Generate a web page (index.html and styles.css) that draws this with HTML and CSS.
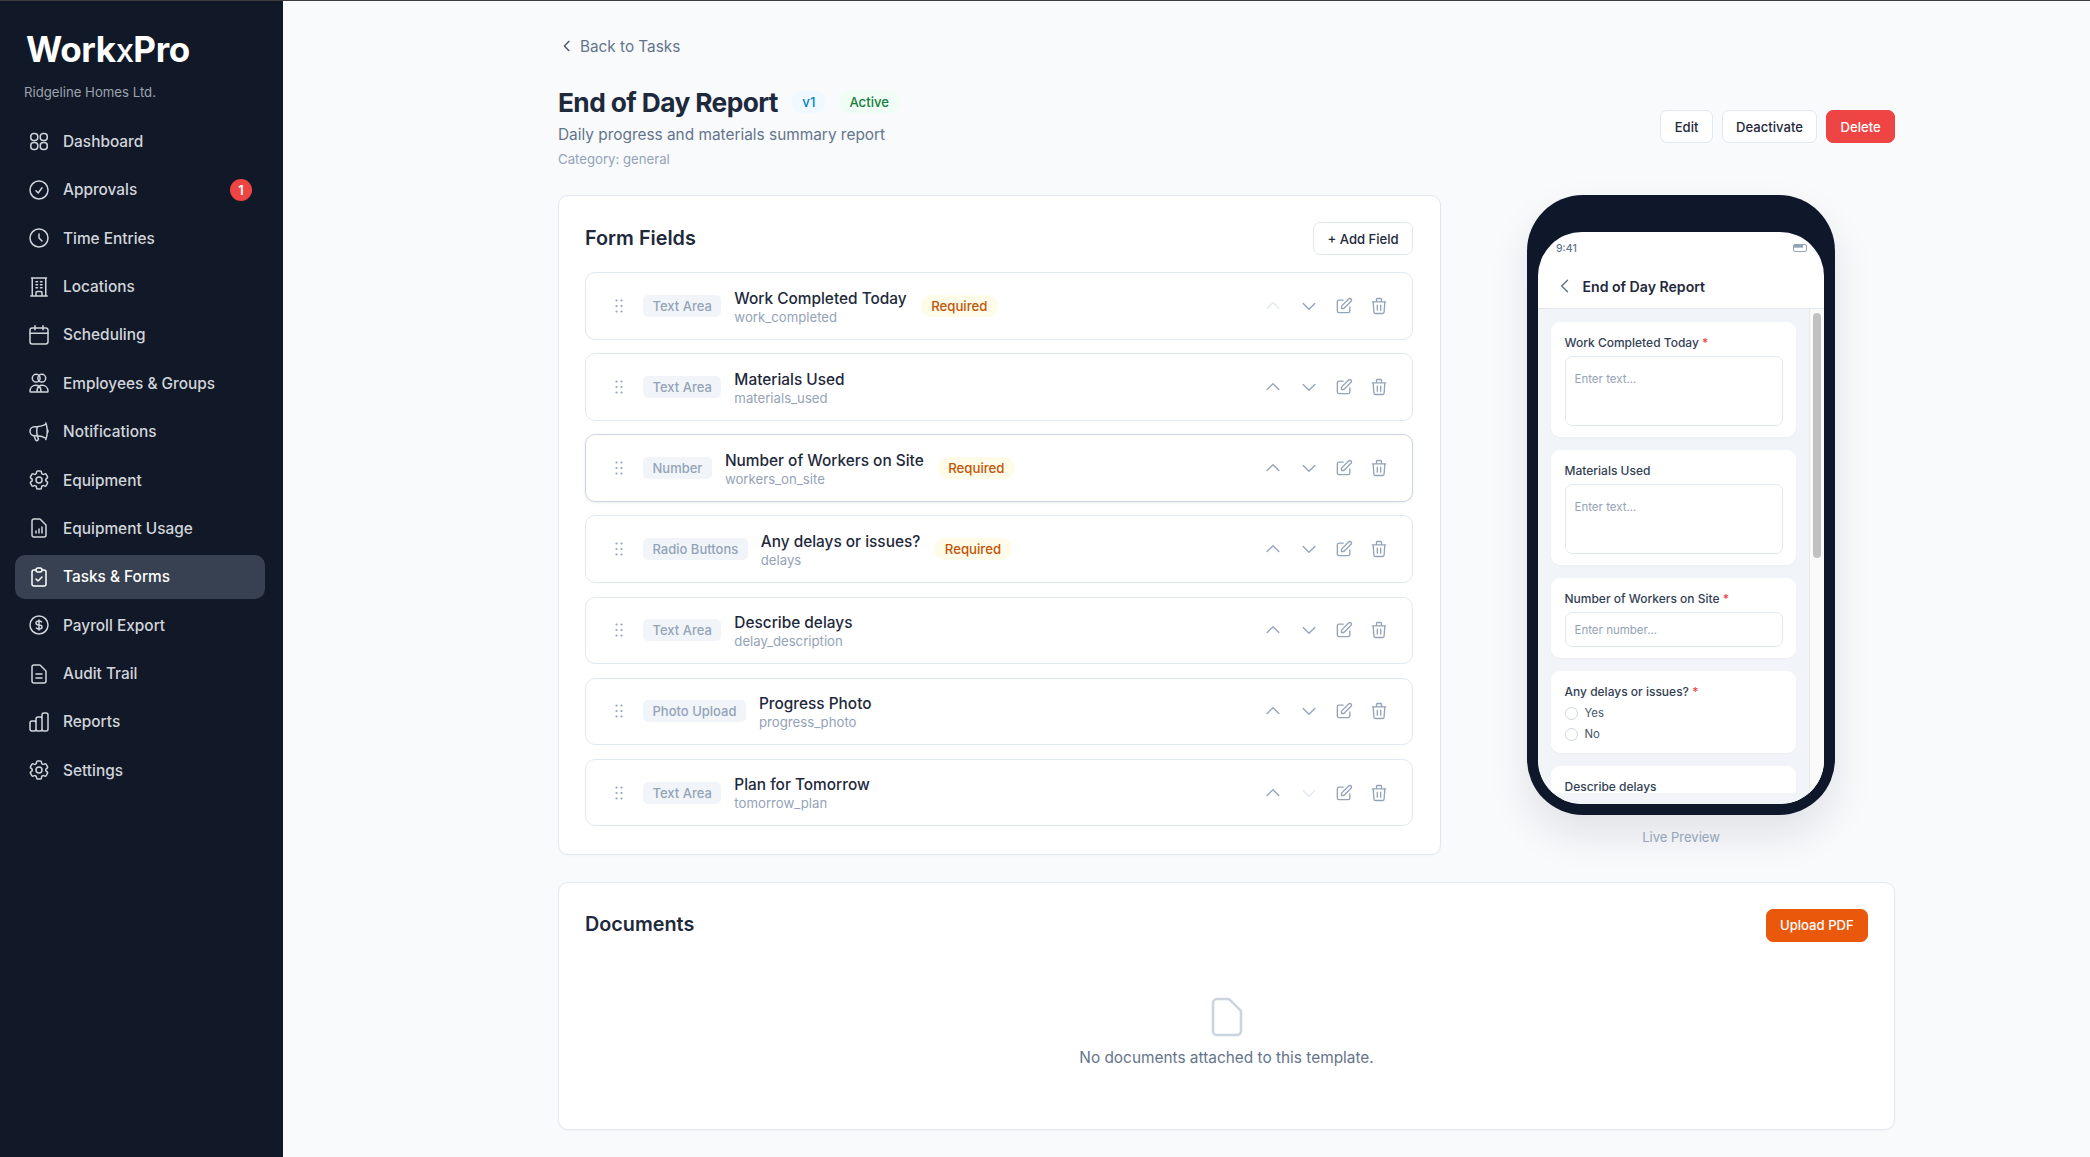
FILE: index.html
```html
<!DOCTYPE html>
<html lang="en">
<head>
<meta charset="utf-8">
<title>End of Day Report</title>
<link rel="stylesheet" href="styles.css">
</head>
<body>
<svg class="defs" aria-hidden="true">
  <symbol id="i-grid" viewBox="0 0 24 24"><rect x="3.75" y="4.5" width="7" height="7" rx="3"/><rect x="13.25" y="4.5" width="7" height="7" rx="3"/><rect x="3.75" y="13.5" width="7" height="7" rx="3"/><rect x="13.25" y="13.5" width="7" height="7" rx="3"/></symbol>
  <symbol id="i-check" viewBox="0 0 24 24"><path d="M9 12.75L11.25 15 15 9.75M21 12a9 9 0 11-18 0 9 9 0 0118 0z"/></symbol>
  <symbol id="i-clock" viewBox="0 0 24 24"><path d="M12 8v4l3 3m6-3a9 9 0 11-18 0 9 9 0 0118 0z"/></symbol>
  <symbol id="i-building" viewBox="0 0 24 24"><path d="M3.75 21h16.5M4.5 3h15M5.25 3v18m13.5-18v18M9 6.75h1.5m-1.5 3h1.5m-1.5 3h1.5m3-6H15m-1.5 3H15m-1.5 3H15M9 21v-3.375c0-.621.504-1.125 1.125-1.125h3.75c.621 0 1.125.504 1.125 1.125V21"/></symbol>
  <symbol id="i-calendar" viewBox="0 0 24 24"><rect x="3" y="5" width="18" height="16" rx="2.2"/><path d="M3 10.2h18M8 2.8v4M16 2.8v4"/></symbol>
  <symbol id="i-users" viewBox="0 0 24 24"><circle cx="9.2" cy="7.2" r="3.9"/><circle cx="14.8" cy="7.2" r="3.9"/><path d="M3 20.3c0-3.5 2.5-6 6-6 1.3 0 2.3.3 3 .9.7-.6 1.7-.9 3-.9 3.5 0 6 2.5 6 6 0 .5-.3.8-.8.8H3.8c-.5 0-.8-.3-.8-.8zM12 15.2c-1.2 1-2 3-2 5.9M12 15.2c1.2 1 2 3 2 5.9"/></symbol>
  <symbol id="i-mega" viewBox="0 0 24 24"><path d="M10.34 15.84c-.688-.06-1.386-.09-2.09-.09H7.5a4.5 4.5 0 110-9h.75c.704 0 1.402-.03 2.09-.09m0 9.18c.253.962.584 1.892.985 2.783.247.55.06 1.21-.463 1.511l-.657.38c-.551.318-1.26.117-1.527-.461a20.845 20.845 0 01-1.44-4.282m3.102.069a18.03 18.03 0 01-.59-4.59c0-1.586.205-3.124.59-4.59m0 9.18a23.848 23.848 0 018.835 2.535M10.34 6.66a23.847 23.847 0 008.835-2.535m0 0A23.74 23.74 0 0018.795 3m.38 1.125a23.91 23.91 0 011.014 5.395m-1.014 8.855c-.118.38-.245.754-.38 1.125m.38-1.125a23.91 23.91 0 001.014-5.395m0-3.46c.495.413.811 1.035.811 1.73 0 .695-.316 1.317-.811 1.73m0-3.46a24.347 24.347 0 010 3.46"/></symbol>
  <symbol id="i-cog" viewBox="0 0 24 24"><path d="M9.594 3.94c.09-.542.56-.94 1.11-.94h2.593c.55 0 1.02.398 1.11.94l.213 1.281c.063.374.313.686.645.87.074.04.147.083.22.127.324.196.72.257 1.075.124l1.217-.456a1.125 1.125 0 011.37.49l1.296 2.247a1.125 1.125 0 01-.26 1.431l-1.003.827c-.293.24-.438.613-.431.992a6.759 6.759 0 010 .255c-.007.378.138.75.43.99l1.005.828c.424.35.534.954.26 1.43l-1.298 2.247a1.125 1.125 0 01-1.369.491l-1.217-.456c-.355-.133-.75-.072-1.076.124a6.57 6.57 0 01-.22.128c-.331.183-.581.495-.644.869l-.213 1.28c-.09.543-.56.941-1.11.941h-2.594c-.55 0-1.02-.398-1.11-.94l-.213-1.281c-.062-.374-.312-.686-.644-.87a6.52 6.52 0 01-.22-.127c-.325-.196-.72-.257-1.076-.124l-1.217.456a1.125 1.125 0 01-1.369-.49l-1.297-2.247a1.125 1.125 0 01.26-1.431l1.004-.827c.292-.24.437-.613.43-.992a6.932 6.932 0 010-.255c.007-.378-.138-.75-.43-.99l-1.004-.828a1.125 1.125 0 01-.26-1.43l1.297-2.247a1.125 1.125 0 011.37-.491l1.216.456c.356.133.751.072 1.076-.124.072-.044.146-.087.22-.128.332-.183.582-.495.644-.869l.214-1.281z"/><path d="M15 12a3 3 0 11-6 0 3 3 0 016 0z"/></symbol>
  <symbol id="i-report" viewBox="0 0 24 24"><path d="M9 17v-2m3 2v-4m3 4v-6m2 10H7a2 2 0 01-2-2V5a2 2 0 012-2h5.586a1 1 0 01.707.293l5.414 5.414a1 1 0 01.293.707V19a2 2 0 01-2 2z"/></symbol>
  <symbol id="i-clipboard" viewBox="0 0 24 24"><path d="M9 5H7a2 2 0 00-2 2v12a2 2 0 002 2h10a2 2 0 002-2V7a2 2 0 00-2-2h-2M9 5a2 2 0 002 2h2a2 2 0 002-2M9 5a2 2 0 012-2h2a2 2 0 012 2m-6 9l2 2 4-4"/></symbol>
  <symbol id="i-dollar" viewBox="0 0 24 24"><path d="M12 8c-1.657 0-3 .895-3 2s1.343 2 3 2 3 .895 3 2-1.343 2-3 2m0-8c1.11 0 2.08.402 2.599 1M12 8V7m0 1v8m0 0v1m0-1c-1.11 0-2.08-.402-2.599-1M21 12a9 9 0 11-18 0 9 9 0 0118 0z"/></symbol>
  <symbol id="i-doc" viewBox="0 0 24 24"><path d="M9 12h6m-6 4h6m2 5H7a2 2 0 01-2-2V5a2 2 0 012-2h5.586a1 1 0 01.707.293l5.414 5.414a1 1 0 01.293.707V19a2 2 0 01-2 2z"/></symbol>
  <symbol id="i-bars" viewBox="0 0 24 24"><path d="M9 19v-6a2 2 0 00-2-2H5a2 2 0 00-2 2v6a2 2 0 002 2h2a2 2 0 002-2zm0 0V9a2 2 0 012-2h2a2 2 0 012 2v10m-6 0a2 2 0 002 2h2a2 2 0 002-2m0 0V5a2 2 0 012-2h2a2 2 0 012 2v14a2 2 0 01-2 2h-2a2 2 0 01-2-2z"/></symbol>
  <symbol id="i-left" viewBox="0 0 24 24"><path d="M15 19l-7-7 7-7"/></symbol>
  <symbol id="i-up" viewBox="0 0 24 24"><path d="M5 15l7-7 7 7"/></symbol>
  <symbol id="i-down" viewBox="0 0 24 24"><path d="M19 9l-7 7-7-7"/></symbol>
  <symbol id="i-edit" viewBox="0 0 24 24"><path d="M11 5H6a2 2 0 00-2 2v11a2 2 0 002 2h11a2 2 0 002-2v-5m-1.414-9.414a2 2 0 112.828 2.828L11.828 15H9v-2.828l8.586-8.586z"/></symbol>
  <symbol id="i-trash" viewBox="0 0 24 24"><path d="M19 7l-.867 12.142A2 2 0 0116.138 21H7.862a2 2 0 01-1.995-1.858L5 7m5 4v6m4-6v6m1-10V4a1 1 0 00-1-1h-4a1 1 0 00-1 1v3M4 7h16"/></symbol>
  <symbol id="i-file" viewBox="0 0 24 24"><path d="M7 21h10a2 2 0 002-2V9.414a1 1 0 00-.293-.707l-5.414-5.414A1 1 0 0012.586 3H7a2 2 0 00-2 2v14a2 2 0 002 2z"/></symbol>
  <symbol id="i-drag" viewBox="0 0 12 16"><circle cx="2.5" cy="2.5" r="1.1"/><circle cx="7.5" cy="2.5" r="1.1"/><circle cx="2.5" cy="8" r="1.1"/><circle cx="7.5" cy="8" r="1.1"/><circle cx="2.5" cy="13.5" r="1.1"/><circle cx="7.5" cy="13.5" r="1.1"/></symbol>
</svg>

<div class="app">
  <aside class="sidebar">
    <div class="brand">
      <div class="logo">Work<span class="logo-x">x</span>Pro</div>
      <div class="company">Ridgeline Homes Ltd.</div>
    </div>
    <nav class="nav">
      <a class="nav-item"><svg class="nav-icon"><use href="#i-grid"/></svg><span>Dashboard</span></a>
      <a class="nav-item"><svg class="nav-icon"><use href="#i-check"/></svg><span>Approvals</span><b class="count">1</b></a>
      <a class="nav-item"><svg class="nav-icon"><use href="#i-clock"/></svg><span>Time Entries</span></a>
      <a class="nav-item"><svg class="nav-icon"><use href="#i-building"/></svg><span>Locations</span></a>
      <a class="nav-item"><svg class="nav-icon"><use href="#i-calendar"/></svg><span>Scheduling</span></a>
      <a class="nav-item"><svg class="nav-icon"><use href="#i-users"/></svg><span>Employees &amp; Groups</span></a>
      <a class="nav-item"><svg class="nav-icon"><use href="#i-mega"/></svg><span>Notifications</span></a>
      <a class="nav-item"><svg class="nav-icon"><use href="#i-cog"/></svg><span>Equipment</span></a>
      <a class="nav-item"><svg class="nav-icon"><use href="#i-report"/></svg><span>Equipment Usage</span></a>
      <a class="nav-item is-active"><svg class="nav-icon"><use href="#i-clipboard"/></svg><span>Tasks &amp; Forms</span></a>
      <a class="nav-item"><svg class="nav-icon"><use href="#i-dollar"/></svg><span>Payroll Export</span></a>
      <a class="nav-item"><svg class="nav-icon"><use href="#i-doc"/></svg><span>Audit Trail</span></a>
      <a class="nav-item"><svg class="nav-icon"><use href="#i-bars"/></svg><span>Reports</span></a>
      <a class="nav-item"><svg class="nav-icon"><use href="#i-cog"/></svg><span>Settings</span></a>
    </nav>
  </aside>

  <main class="main">
    <a class="back"><svg class="back-icon"><use href="#i-left"/></svg>Back to Tasks</a>

    <header class="page-head">
      <div class="head-text">
        <div class="title-row">
          <h1 class="title">End of Day Report</h1>
          <span class="pill pill-blue">v1</span>
          <span class="pill pill-green">Active</span>
        </div>
        <p class="subtitle">Daily progress and materials summary report</p>
        <p class="category">Category: general</p>
      </div>
      <div class="head-actions">
        <button class="btn">Edit</button>
        <button class="btn">Deactivate</button>
        <button class="btn btn-red">Delete</button>
      </div>
    </header>

    <div class="columns">
      <section class="card fields-card">
        <div class="card-head">
          <h2 class="card-title">Form Fields</h2>
          <button class="btn">+ Add Field</button>
        </div>
        <div class="rows">
          <div class="row">
            <svg class="drag"><use href="#i-drag"/></svg>
            <span class="type">Text Area</span>
            <div class="names"><div class="name">Work Completed Today</div><div class="key">work_completed</div></div>
            <span class="pill pill-amber">Required</span>
            <div class="actions"><svg class="act is-off"><use href="#i-up"/></svg><svg class="act"><use href="#i-down"/></svg><svg class="act"><use href="#i-edit"/></svg><svg class="act"><use href="#i-trash"/></svg></div>
          </div>
          <div class="row">
            <svg class="drag"><use href="#i-drag"/></svg>
            <span class="type">Text Area</span>
            <div class="names"><div class="name">Materials Used</div><div class="key">materials_used</div></div>
            <div class="actions"><svg class="act"><use href="#i-up"/></svg><svg class="act"><use href="#i-down"/></svg><svg class="act"><use href="#i-edit"/></svg><svg class="act"><use href="#i-trash"/></svg></div>
          </div>
          <div class="row is-hover">
            <svg class="drag"><use href="#i-drag"/></svg>
            <span class="type">Number</span>
            <div class="names"><div class="name">Number of Workers on Site</div><div class="key">workers_on_site</div></div>
            <span class="pill pill-amber">Required</span>
            <div class="actions"><svg class="act"><use href="#i-up"/></svg><svg class="act"><use href="#i-down"/></svg><svg class="act"><use href="#i-edit"/></svg><svg class="act"><use href="#i-trash"/></svg></div>
          </div>
          <div class="row">
            <svg class="drag"><use href="#i-drag"/></svg>
            <span class="type">Radio Buttons</span>
            <div class="names"><div class="name">Any delays or issues?</div><div class="key">delays</div></div>
            <span class="pill pill-amber">Required</span>
            <div class="actions"><svg class="act"><use href="#i-up"/></svg><svg class="act"><use href="#i-down"/></svg><svg class="act"><use href="#i-edit"/></svg><svg class="act"><use href="#i-trash"/></svg></div>
          </div>
          <div class="row">
            <svg class="drag"><use href="#i-drag"/></svg>
            <span class="type">Text Area</span>
            <div class="names"><div class="name">Describe delays</div><div class="key">delay_description</div></div>
            <div class="actions"><svg class="act"><use href="#i-up"/></svg><svg class="act"><use href="#i-down"/></svg><svg class="act"><use href="#i-edit"/></svg><svg class="act"><use href="#i-trash"/></svg></div>
          </div>
          <div class="row">
            <svg class="drag"><use href="#i-drag"/></svg>
            <span class="type">Photo Upload</span>
            <div class="names"><div class="name">Progress Photo</div><div class="key">progress_photo</div></div>
            <div class="actions"><svg class="act"><use href="#i-up"/></svg><svg class="act"><use href="#i-down"/></svg><svg class="act"><use href="#i-edit"/></svg><svg class="act"><use href="#i-trash"/></svg></div>
          </div>
          <div class="row">
            <svg class="drag"><use href="#i-drag"/></svg>
            <span class="type">Text Area</span>
            <div class="names"><div class="name">Plan for Tomorrow</div><div class="key">tomorrow_plan</div></div>
            <div class="actions"><svg class="act"><use href="#i-up"/></svg><svg class="act is-off"><use href="#i-down"/></svg><svg class="act"><use href="#i-edit"/></svg><svg class="act"><use href="#i-trash"/></svg></div>
          </div>
        </div>
      </section>

      <aside class="preview">
        <div class="phone">
          <div class="screen">
            <div class="status"><span>9:41</span><span class="battery"></span></div>
            <div class="phone-bar"><svg class="phone-back"><use href="#i-left"/></svg><span>End of Day Report</span></div>
            <div class="phone-content">
              <div class="phone-scroll">
                <div class="phone-form">
                  <div class="f-card"><div class="f-label">Work Completed Today <i>*</i></div><div class="f-input f-area">Enter text...</div></div>
                  <div class="f-card"><div class="f-label">Materials Used</div><div class="f-input f-area">Enter text...</div></div>
                  <div class="f-card"><div class="f-label">Number of Workers on Site <i>*</i></div><div class="f-input">Enter number...</div></div>
                  <div class="f-card f-card-radios"><div class="f-label">Any delays or issues? <i>*</i></div><div class="f-radio"><span class="dot"></span>Yes</div><div class="f-radio"><span class="dot"></span>No</div></div>
                  <div class="f-card"><div class="f-label">Describe delays</div></div>
                </div>
              </div>
              <div class="track"><div class="thumb"></div></div>
            </div>
          </div>
        </div>
        <div class="live">Live Preview</div>
      </aside>
    </div>

    <section class="card docs-card">
      <div class="card-head">
        <h2 class="card-title">Documents</h2>
        <button class="btn btn-orange">Upload PDF</button>
      </div>
      <div class="empty">
        <svg class="empty-icon"><use href="#i-file"/></svg>
        <p class="empty-text">No documents attached to this template.</p>
      </div>
    </section>
  </main>
</div>
</body>
</html>
```

FILE: styles.css
```css
* { box-sizing: border-box; }
html, body { margin: 0; height: 100%; }
body {
  font-family: Inter, "Noto Sans", "Liberation Sans", sans-serif;
  background: #f8fafc;
  color: #1e293b;
  overflow: hidden;
}
p, h1, h2 { margin: 0; }
.defs { display: none; }
.app {
  display: flex;
  height: 1157px;
  border-top: 1px solid #3d3d3d;
}

/* Sidebar */
.sidebar {
  width: 283px;
  flex: none;
  background: #111827;
  padding: 0 18px 0 15px;
}
.brand { padding: 24px 0 0 8px; height: 118.4px; }
.logo {
  font-size: 35px;
  font-weight: 700;
  line-height: 48px;
  letter-spacing: -0.35px;
  color: #fff;
  padding-left: 3px;
}
.logo-x { font-size: 33px; font-weight: 500; letter-spacing: -0.8px; }
.company {
  margin-top: 8.5px;
  font-size: 13.2px;
  line-height: 18px;
  color: #9ca3af;
  margin-left: 1px;
}
.nav { display: flex; flex-direction: column; gap: 4.38px; }
.nav-item {
  display: flex;
  align-items: center;
  height: 44px;
  padding: 0 13px 0 12px;
  border-radius: 10px;
  font-size: 15.4px;
  font-weight: 500;
  color: #d1d5db;
}
.nav-icon {
  width: 24px;
  height: 24px;
  flex: none;
  margin-right: 12px;
  fill: none;
  stroke: currentColor;
  stroke-width: 1.5;
  stroke-linecap: round;
  stroke-linejoin: round;
}
.nav-item.is-active { background: #374151; color: #fff; }
.count {
  margin-left: auto;
  width: 22px;
  height: 22px;
  border-radius: 50%;
  background: #ef4444;
  color: #fff;
  font-size: 13px;
  font-weight: 600;
  display: flex;
  align-items: center;
  justify-content: center;
}

/* Main */
.main {
  flex: 1;
  min-width: 0;
  padding: 0 195px 0 275px;
}
.back {
  display: flex;
  align-items: center;
  height: 20px;
  margin-top: 35px;
  font-size: 15.3px;
  color: #64748b;
  padding-left: 1px;
}
.back-icon {
  width: 16px;
  height: 16px;
  margin-right: 5px;
  fill: none;
  stroke: #475569;
  stroke-width: 2;
  stroke-linecap: round;
  stroke-linejoin: round;
}
.page-head {
  display: flex;
  align-items: center;
  justify-content: space-between;
  margin-top: 26px;
}
.title-row { display: flex; align-items: center; height: 42px; }
.title {
  font-size: 26.3px;
  font-weight: 700;
  letter-spacing: -0.6px;
  line-height: 42px;
  color: #1e293b;
  margin-right: 14.5px;
}
.subtitle { font-size: 15.4px; line-height: 22px; color: #64748b; margin-top: 0; }
.category { font-size: 13.2px; line-height: 18px; color: #94a3b8; margin-top: 4px; }
.head-actions { display: flex; gap: 9px; margin-top: 3px; }
.btn {
  height: 33px;
  padding: 0 13.3px;
  border: 1px solid #e2e8f0;
  border-radius: 7px;
  background: #fff;
  font: 500 13.1px Inter, sans-serif;
  color: #1e293b;
}
.btn-red { background: #ef4444; border-color: #ef4444; color: #fff; }
.btn-orange { background: #ea580c; border-color: #ea580c; color: #fff; }
.pill {
  display: inline-flex;
  align-items: center;
  height: 22px;
  padding: 0 10.5px;
  border-radius: 11px;
  font-size: 13.2px;
  font-weight: 500;
  white-space: nowrap;
}
.pill-blue { background: #f0f9ff; color: #0284c7; padding: 0 10px; margin: 0 13.5px 2px 0; }
.pill-green { background: #f0fdf4; color: #15803d; margin-bottom: 2px; }
.pill-amber { background: #fefce8; color: #c2540a; margin-left: 14px; }

/* Columns */
.columns { display: flex; gap: 26px; margin-top: 27px; }
.card {
  background: #fff;
  border: 1px solid #e2e8f0;
  border-radius: 10px;
  padding: 26px;
  box-shadow: 0 1px 2px rgba(15, 23, 42, .03);
}
.fields-card { width: 883px; flex: none; height: 659.5px; padding-right: 27px; }
.card-head { display: flex; align-items: center; justify-content: space-between; height: 33px; }
.card-title { font-size: 19.8px; font-weight: 600; color: #1e293b; margin-top: -2px; }
.rows { display: flex; flex-direction: column; gap: 13.6px; margin-top: 17.2px; }
.row {
  display: flex;
  align-items: center;
  height: 67.5px;
  padding: 0 23px 0 27.5px;
  border: 1px solid #e2e8f0;
  border-radius: 10px;
  background: #fff;
}
.row.is-hover { border-color: #cbd5e1; box-shadow: 0 1px 3px rgba(15, 23, 42, .08); }
.drag { width: 12px; height: 16px; flex: none; fill: #94a3b8; margin-right: 17.5px; }
.type {
  flex: none;
  height: 22px;
  padding: 0 9.5px;
  display: flex;
  align-items: center;
  border-radius: 5px;
  background: #f1f5f9;
  color: #94a3b8;
  font-size: 13px;
  font-weight: 500;
  margin-right: 13px;
}
.names { display: flex; flex-direction: column; padding-top: 2.5px; }
.name { font-size: 15.4px; font-weight: 500; line-height: 20px; color: #1e293b; }
.key { font-size: 13.2px; line-height: 18px; color: #94a3b8; margin-top: -1px; }
.actions { margin-left: auto; display: flex; gap: 15.2px; }
.act {
  width: 20px;
  height: 20px;
  fill: none;
  stroke: #94a3b8;
  stroke-width: 1.6;
  stroke-linecap: round;
  stroke-linejoin: round;
}
.act.is-off { stroke: #e2e8f0; }

/* Phone */
.preview { flex: 1; display: flex; flex-direction: column; align-items: center; }
.phone {
  width: 308px;
  height: 620px;
  flex: none;
  padding: 37px 11px 11px;
  background: #0f172a;
  border-radius: 56px;
  box-shadow: 0 20px 40px rgba(15, 23, 42, .1);
}
.screen {
  height: 100%;
  background: #fff;
  border-radius: 44px;
  overflow: hidden;
  display: flex;
  flex-direction: column;
}
.status {
  flex: none;
  height: 32px;
  padding: 0 17px 0 18px;
  display: flex;
  align-items: center;
  justify-content: space-between;
  font-size: 10.5px;
  font-weight: 500;
  color: #64748b;
}
.battery {
  width: 14px;
  height: 8px;
  border: 1px solid #94a3b8;
  border-radius: 2px;
  background: linear-gradient(#94a3b8, #94a3b8) left top / 75% 45% no-repeat;
}
.phone-bar {
  flex: none;
  height: 45px;
  padding: 0 20px 0 16.5px;
  display: flex;
  align-items: center;
  border-bottom: 1px solid #e2e8f0;
  font-size: 14.1px;
  font-weight: 600;
  color: #1e293b;
}
.phone-back {
  width: 20px;
  height: 20px;
  margin-right: 8px;
  fill: none;
  stroke: #64748b;
  stroke-width: 1.7;
  stroke-linecap: round;
  stroke-linejoin: round;
}
.phone-content { flex: 1; min-height: 0; display: flex; background: #f1f5f9; }
.phone-scroll { flex: 1; min-width: 0; height: 484px; overflow: hidden; }
.phone-form { padding: 13px 13px 0; display: flex; flex-direction: column; gap: 13px; }
.f-card {
  background: #fff;
  border-radius: 9px;
  padding: 12.5px 13.5px 11px;
  box-shadow: 0 1px 2px rgba(15, 23, 42, .03);
}
.f-card-radios { padding-bottom: 8.5px; }
.f-label { font-size: 12px; font-weight: 500; line-height: 15px; color: #334155; }
.f-label i { font-style: normal; color: #ef4444; }
.f-input {
  margin-top: 6.5px;
  height: 35px;
  padding: 0 9px;
  display: flex;
  align-items: center;
  border: 1px solid #e2e8f0;
  border-radius: 7px;
  font-size: 11.5px;
  color: #94a3b8;
}
.f-area { height: 70px; align-items: flex-start; padding-top: 15px; line-height: 14px; }
.f-radio {
  display: flex;
  align-items: center;
  height: 21px;
  font-size: 11.3px;
  color: #475569;
}
.f-label + .f-radio { margin-top: 4px; }
.dot {
  width: 13px;
  height: 13px;
  border: 1px solid #cbd5e1;
  border-radius: 50%;
  margin-right: 7px;
  background: #fff;
}
.track { width: 15px; flex: none; background: #fafafa; border-left: 1px solid #e8e8e8; padding: 4px 3px 0; }
.thumb { width: 8px; height: 245px; border-radius: 4px; background: #c1c1c1; }
.live { margin-top: 13px; font-size: 13px; line-height: 18px; color: #94a3b8; }

/* Documents */
.docs-card { margin-top: 27px; height: 248.5px; }
.empty { display: flex; flex-direction: column; align-items: center; margin-top: 51px; }
.empty-icon {
  width: 48px;
  height: 48px;
  fill: none;
  stroke: #cbd5e1;
  stroke-width: 1.3;
  stroke-linecap: round;
  stroke-linejoin: round;
}
.empty-text { margin-top: 6px; font-size: 15.4px; line-height: 22px; color: #64748b; }
```
